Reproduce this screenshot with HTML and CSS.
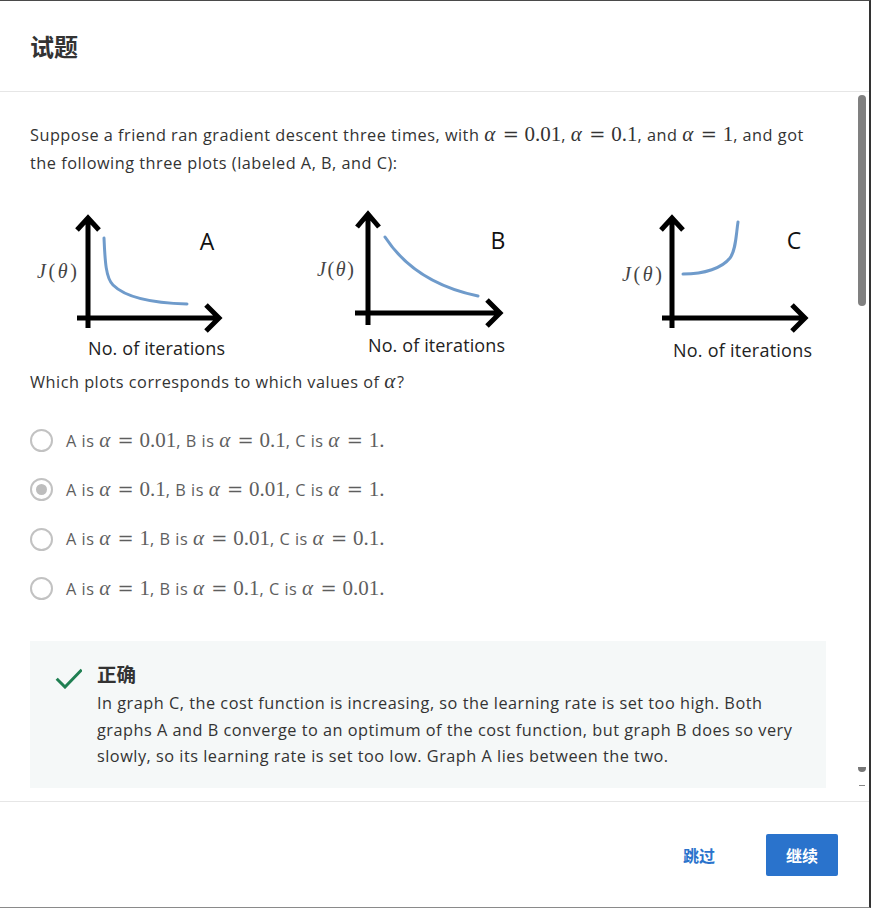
FILE: index.html
```html
<!DOCTYPE html>
<html lang="zh">
<head>
<meta charset="utf-8">
<title>试题</title>
<link rel="stylesheet" href="styles.css">
</head>
<body>
<div class="modal">
  <header class="modal-header">
    <h1 class="title">试题</h1>
  </header>
  <div class="modal-body">
    <div class="content">
      <p class="question">Suppose a friend ran gradient descent three times, with <span class="m"><i>α</i><span class="rel">=</span>0.01</span>, <span class="m"><i>α</i><span class="rel">=</span>0.1</span>, and <span class="m"><i>α</i><span class="rel">=</span>1</span>, and got the following three plots (labeled A, B, and C):</p>
      <svg class="plots" width="800" height="168" viewBox="0 0 800 168" xmlns="http://www.w3.org/2000/svg">
        <g class="axis" fill="none" stroke="#000" stroke-width="5">
          <path d="M58 17 V128 M47 30 L58 18 L69 30 M47 118 H189 M176 105 L189 118 L176 131"/>
          <path d="M338 13 V125 M327 27 L338 14 L349 27 M325 113 H470 M457 100 L470 113 L457 126"/>
          <path d="M642 17 V128 M631 30 L642 18 L653 30 M632 118 H775 M762 105 L775 118 L762 131"/>
        </g>
        <g fill="none" stroke="#6f9bcb" stroke-width="3" stroke-linecap="round">
          <path d="M74 38 C75 62 76 78 83 85 C95 97 120 103 157 104"/>
          <path d="M355 37 Q385 83 448 96"/>
          <path d="M653 74 C675 74 692 68 700 58 C706 50 706 35 708 22"/>
        </g>
        <g class="lbl">
          <text x="177" y="50" text-anchor="middle">A</text>
          <text x="468" y="49" text-anchor="middle">B</text>
          <text x="764" y="49" text-anchor="middle">C</text>
        </g>
        <g class="jt">
          <text x="7" y="78" textLength="40"><tspan font-style="italic">J</tspan>(<tspan font-style="italic">θ</tspan>)</text>
          <text x="287" y="76" textLength="37"><tspan font-style="italic">J</tspan>(<tspan font-style="italic">θ</tspan>)</text>
          <text x="592" y="81" textLength="40"><tspan font-style="italic">J</tspan>(<tspan font-style="italic">θ</tspan>)</text>
        </g>
        <g class="iter">
          <text x="58" y="155" textLength="137">No. of iterations</text>
          <text x="338" y="152" textLength="137">No. of iterations</text>
          <text x="643" y="157" textLength="139">No. of iterations</text>
        </g>
      </svg>
      <p class="question q2">Which plots corresponds to which values of <span class="m"><i>α</i></span>?</p>
      <ul class="options">
        <li class="option"><span class="radio"></span><span class="opt-text">A is <span class="m"><i>α</i><span class="rel">=</span>0.01</span>, B is <span class="m"><i>α</i><span class="rel">=</span>0.1</span>, C is <span class="m"><i>α</i><span class="rel">=</span>1.</span></span></li>
        <li class="option"><span class="radio checked"></span><span class="opt-text">A is <span class="m"><i>α</i><span class="rel">=</span>0.1</span>, B is <span class="m"><i>α</i><span class="rel">=</span>0.01</span>, C is <span class="m"><i>α</i><span class="rel">=</span>1.</span></span></li>
        <li class="option"><span class="radio"></span><span class="opt-text">A is <span class="m"><i>α</i><span class="rel">=</span>1</span>, B is <span class="m"><i>α</i><span class="rel">=</span>0.01</span>, C is <span class="m"><i>α</i><span class="rel">=</span>0.1.</span></span></li>
        <li class="option"><span class="radio"></span><span class="opt-text">A is <span class="m"><i>α</i><span class="rel">=</span>1</span>, B is <span class="m"><i>α</i><span class="rel">=</span>0.1</span>, C is <span class="m"><i>α</i><span class="rel">=</span>0.01.</span></span></li>
      </ul>
      <div class="feedback">
        <svg class="check" width="28" height="24" viewBox="0 0 28 24" xmlns="http://www.w3.org/2000/svg"><path d="M2.7 13.7 L11 22 L27.7 4.7" fill="none" stroke="#1f7f52" stroke-width="3"/></svg>
        <div class="fb-text">
          <div class="fb-title">正确</div>
          <p class="fb-body">In graph C, the cost function is increasing, so the learning rate is set too high. Both graphs A and B converge to an optimum of the cost function, but graph B does so very slowly, so its learning rate is set too low. Graph A lies between the two.</p>
        </div>
      </div>
    </div>
    <div class="scrollbar">
      <div class="thumb"></div>
      <div class="arrow-down"></div>
      <div class="dash"></div>
    </div>
  </div>
  <footer class="modal-footer">
    <a class="skip" href="#">跳过</a>
    <button class="primary" type="button">继续</button>
  </footer>
</div>
</body>
</html>
```

FILE: styles.css
```css
* { box-sizing: border-box; }
html, body { margin: 0; padding: 0; background: #fff; }
body {
  font-family: "Open Sans", "Noto Sans", "Noto Sans CJK SC", sans-serif;
  color: #333;
  width: 871px;
  height: 908px;
  overflow: hidden;
}
.modal {
  width: 871px;
  height: 908px;
  border-top: 1px solid #4a4a4a;
  border-right: 2px solid #333;
  border-bottom: 1px solid #8a8a8a;
  display: flex;
  flex-direction: column;
  background: #fff;
}
.modal-header {
  height: 91px;
  flex: 0 0 91px;
  border-bottom: 1px solid #e6e6e6;
  display: flex;
  align-items: center;
  padding-left: 30px;
}
.title {
  margin: 0;
  font-family: "Noto Sans CJK SC", sans-serif;
  font-size: 24px;
  font-weight: 700;
  color: #333;
  line-height: 1;
}
.modal-body {
  flex: 1 1 auto;
  position: relative;
  overflow: hidden;
}
.content {
  padding: 29px 43px 0 30px;
}
.question {
  margin: 0;
  font-size: 16.3px;
  letter-spacing: 0.5px;
  line-height: 28px;
  color: #333;
}
.m {
  font-family: "Liberation Serif", "DejaVu Serif", serif;
  font-size: 21px;
  letter-spacing: 0;
  line-height: 1;
}
.m i { font-style: italic; margin-right: 0.08em; }
.rel {
  font-family: "DejaVu Serif", serif;
  font-size: 0.92em;
  margin: 0 0.3em;
}
.plots {
  display: block;
  margin-top: 23px;
}
.lbl text {
  font-family: "Open Sans", sans-serif;
  font-size: 23px;
  fill: #111;
}
.jt text {
  font-family: "Liberation Serif", serif;
  font-size: 20px;
  fill: #444;
}
.iter text {
  font-family: "Open Sans", sans-serif;
  font-size: 18px;
  fill: #222;
}
.options {
  list-style: none;
  margin: 20px 0 0 0;
  padding: 0;
}
.option {
  height: 49.33px;
  display: flex;
  align-items: center;
  gap: 13px;
}
.radio {
  width: 23px;
  height: 23px;
  border: 2px solid #c2c2c2;
  border-radius: 50%;
  display: flex;
  align-items: center;
  justify-content: center;
  flex: 0 0 23px;
}
.radio.checked::after {
  content: "";
  width: 11px;
  height: 11px;
  border-radius: 50%;
  background: #bdbdbd;
}
.opt-text {
  font-size: 16.3px;
  letter-spacing: 0.5px;
  color: #5e5e5e;
  line-height: 24px;
}
.feedback {
  margin-top: 28px;
  background: #f5f8f8;
  padding: 20px 27px 18px 24px;
  display: flex;
  gap: 15px;
}
.check {
  flex: 0 0 28px;
  margin-top: 4px;
}
.fb-title {
  font-family: "Noto Sans CJK SC", sans-serif;
  font-size: 19.5px;
  font-weight: 700;
  line-height: 26px;
  color: #333;
}
.fb-body {
  margin: 3px 0 0 0;
  font-size: 16.3px;
  letter-spacing: 0.5px;
  line-height: 26.5px;
  color: #333;
}
.scrollbar {
  position: absolute;
  top: 0;
  right: 0;
  width: 12px;
  height: 100%;
}
.thumb {
  position: absolute;
  top: 3px;
  left: 1px;
  width: 8px;
  height: 211px;
  border-radius: 4px;
  background: #808080;
}
.arrow-down {
  position: absolute;
  top: 675px;
  left: 1px;
  width: 8px;
  height: 5px;
  background: #777;
  border-radius: 0 0 4px 4px;
}
.dash {
  position: absolute;
  top: 693px;
  left: 2px;
  width: 6px;
  height: 1px;
  background: #888;
}
.modal-footer {
  flex: 0 0 106px;
  border-top: 1px solid #e6e6e6;
  display: flex;
  align-items: center;
  justify-content: flex-end;
  padding-right: 31px;
}
.skip {
  font-family: "Noto Sans CJK SC", sans-serif;
  font-size: 16px;
  font-weight: 700;
  color: #2a73cc;
  text-decoration: none;
  margin-right: 51px;
}
.primary {
  font-family: "Noto Sans CJK SC", sans-serif;
  font-size: 16px;
  font-weight: 700;
  color: #fff;
  background: #2a73cc;
  border: none;
  border-radius: 2px;
  width: 72px;
  height: 42px;
  padding: 0;
}
```
